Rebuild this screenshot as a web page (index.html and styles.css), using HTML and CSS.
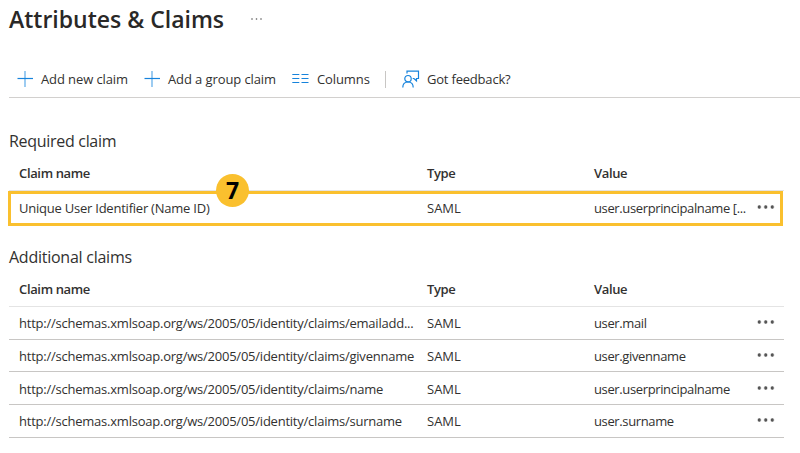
FILE: index.html
```
<!DOCTYPE html>
<html lang="en">
<head>
<meta charset="utf-8">
<title>Attributes &amp; Claims</title>
<link rel="stylesheet" href="styles.css">
</head>
<body>
<header class="head"><h1>Attributes &amp; Claims</h1><svg class="more" width="14" height="4" viewBox="0 0 14 4" fill="#555"><circle cx="2" cy="2" r=".8"/><circle cx="6.500" cy="2" r=".8"/><circle cx="11" cy="2" r=".8"/></svg></header>
<nav class="bar">
<button class="cmd add"><svg width="16" height="16" viewBox="0 0 16 16" fill="none" stroke="#1683dc" stroke-width="1.2"><path stroke="#5ba9e8" d="M8 0v16"/><path d="M.5 7.500h15.500"/></svg><span>Add new claim</span></button>
<button class="cmd group"><svg width="16" height="16" viewBox="0 0 16 16" fill="none" stroke="#1683dc" stroke-width="1.2"><path stroke="#5ba9e8" d="M8 0v16"/><path d="M.5 7.500h15.500"/></svg><span>Add a group claim</span></button>
<button class="cmd cols"><svg width="17" height="12" viewBox="0 0 17 12" fill="none" stroke="#1683dc" stroke-width="1.200"><path d="M.3 1.500h7M9.500 1.500h7M.3 5.500h7M9.500 5.500h7M.3 9.500h7M9.500 9.500h7"/></svg><span>Columns</span></button>
<i class="sep"></i>
<button class="cmd feed"><svg width="18" height="18" viewBox="0 0 18 18" fill="none" stroke="#1683dc" stroke-width="1.2"><path d="M5 3.500V1.200h11.500v7.300h-2v2.300l-2.600-2.300h-1.200M.8 17.500c0-3.300 2-5.500 5.200-5.500s5.200 2.200 5.200 5.500"/><circle cx="6" cy="8.700" r="3.200"/></svg><span>Got feedback?</span></button>
</nav>
<main>
<section>
<h2>Required claim</h2>
<div class="row th"><span>Claim name</span><span>Type</span><span>Value</span></div>
<div class="row hot"><span>Unique User Identifier (Name ID)</span><span class="type">SAML</span><span class="val">user.userprincipalname [...</span><b class="dots"></b><em class="badge">7</em></div>
</section>
<section class="extra">
<h2 class="second">Additional claims</h2>
<div class="row th"><span>Claim name</span><span>Type</span><span>Value</span></div>
<div class="row"><span>http://schemas.xmlsoap.org/ws/2005/05/identity/claims/emailadd...</span><span class="type">SAML</span><span class="val">user.mail</span><b class="dots"></b></div>
<div class="row"><span>http://schemas.xmlsoap.org/ws/2005/05/identity/claims/givenname</span><span class="type">SAML</span><span class="val">user.givenname</span><b class="dots"></b></div>
<div class="row"><span>http://schemas.xmlsoap.org/ws/2005/05/identity/claims/name</span><span class="type">SAML</span><span class="val">user.userprincipalname</span><b class="dots"></b></div>
<div class="row"><span>http://schemas.xmlsoap.org/ws/2005/05/identity/claims/surname</span><span class="type">SAML</span><span class="val">user.surname</span><b class="dots"></b></div>
</section>
</main>
</body>
</html>
```
FILE: styles.css
```
*{box-sizing:border-box}
body{margin:0;height:453px;overflow:hidden;background:#fff;color:#323130;font:13px/20px "Open Sans","Noto Sans",sans-serif}
h1,h2{margin:0}
.head{height:61px;padding-left:9px;display:flex}
h1{font-size:23px;line-height:38px;font-weight:600;width:241px;color:#292827;white-space:nowrap}
.more{margin-top:17px}
.bar{height:37px;margin-left:9px;border-bottom:1px solid #d2d0ce;display:flex;align-items:center;padding-left:8px}
.cmd{display:flex;align-items:center;gap:8px;padding:0;border:0;background:none;color:inherit;font:inherit;letter-spacing:-.1px;white-space:nowrap}
.add{width:127px}
.group{width:148px}
.cols{width:93px}
.sep{width:1px;height:17px;background:#c8c6c4;margin-right:16px}
.feed{letter-spacing:-.2px;gap:7px}
main{padding-left:9px;width:784px}
section{padding-top:32px}
h2{font-size:16px;line-height:22px;font-weight:400;letter-spacing:-.3px}
.row{display:grid;grid-template-columns:408px 167px 162px 18px;height:32.7px;align-items:center;padding-left:10px;padding-top:1px;border-bottom:1px solid #c8c6c4;letter-spacing:-.23px;white-space:nowrap}
.type{letter-spacing:0}
.val{letter-spacing:-.37px}
.th{height:39px;padding-top:3px;font-weight:600;letter-spacing:-.35px;border-color:#e4e4e4}
.hot{position:relative;width:775px;height:35px;margin-left:-1px;border:3px solid #fac02e;padding:0 0 1px 8px}
.dots{width:19px;height:4px;margin-top:-2px;background:radial-gradient(circle,#555 1.4px,transparent 2px) 0 0/6.5px 4px}
.badge{position:absolute;left:205px;top:-20px;width:33px;height:33px;border-radius:50%;background:#fac02e;color:#000;font:700 23px/32px "Open Sans",sans-serif;text-align:center}
.extra{padding-top:20px}
.second{letter-spacing:-.25px}
```
